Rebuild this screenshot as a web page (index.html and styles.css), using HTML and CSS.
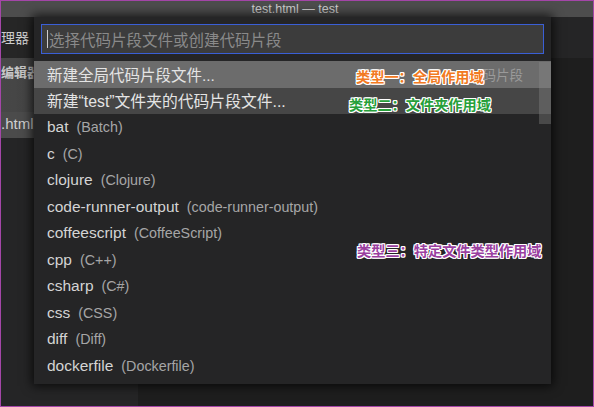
FILE: index.html
```html
<!DOCTYPE html>
<html lang="zh">
<head>
<meta charset="utf-8">
<link rel="stylesheet" href="styles.css">
</head>
<body>
<div class="frame">
  <div class="titlebar">test.html — test</div>
  <div class="main">
    <aside class="sidebar">
      <div class="side-head">理器</div>
      <div class="side-open">
        <div class="side-section">编辑器</div>
        <div class="side-gap"></div>
        <div class="side-file">.html</div>
      </div>
    </aside>
    <section class="editor">
      <div class="tabs"></div>
      <div class="editor-body"></div>
    </section>
  </div>

  <div class="quickpick">
    <div class="qp-input"><span class="caret"></span><span class="placeholder">选择代码片段文件或创建代码片段</span></div>
    <ul class="qp-list">
      <li class="row row-hl1"><span class="label">新建全局代码片段文件...</span><span class="ghost">码片段</span></li>
      <li class="row row-hl2"><span class="label">新建“test”文件夹的代码片段文件...</span></li>
      <li class="row"><span class="label">bat</span><span class="desc">(Batch)</span></li>
      <li class="row"><span class="label">c</span><span class="desc">(C)</span></li>
      <li class="row"><span class="label">clojure</span><span class="desc">(Clojure)</span></li>
      <li class="row"><span class="label">code-runner-output</span><span class="desc">(code-runner-output)</span></li>
      <li class="row"><span class="label">coffeescript</span><span class="desc">(CoffeeScript)</span></li>
      <li class="row"><span class="label">cpp</span><span class="desc">(C++)</span></li>
      <li class="row"><span class="label">csharp</span><span class="desc">(C#)</span></li>
      <li class="row"><span class="label">css</span><span class="desc">(CSS)</span></li>
      <li class="row"><span class="label">diff</span><span class="desc">(Diff)</span></li>
      <li class="row"><span class="label">dockerfile</span><span class="desc">(Dockerfile)</span></li>
    </ul>
    <div class="scrollbar"></div>
  </div>

  <div class="note note-1">类型一：全局作用域</div>
  <div class="note note-2">类型二：文件夹作用域</div>
  <div class="note note-3">类型三：特定文件类型作用域</div>
</div>
</body>
</html>
```

FILE: styles.css
```css
* { box-sizing: border-box; margin: 0; padding: 0; }
html, body { width: 594px; height: 407px; overflow: hidden; background: #1e1e1e; }
body {
  font-family: "Liberation Sans", "Noto Sans CJK SC", sans-serif;
  color: #cccccc;
}
.frame {
  position: relative;
  width: 594px;
  height: 407px;
  border: 1px solid #a446a8;
  display: flex;
  flex-direction: column;
  background: #1e1e1e;
}
.titlebar {
  height: 16px;
  background: #4d4d4d;
  color: #cfcfcf;
  font-size: 12.5px;
  line-height: 16px;
  text-align: center;
  padding-right: 4px;
}
.main { flex: 1; display: flex; min-height: 0; }
.sidebar {
  width: 137px;
  background: #252526;
  display: flex;
  flex-direction: column;
  overflow: hidden;
  white-space: nowrap;
}
.side-head {
  height: 41px;
  line-height: 41px;
  font-family: "Noto Sans CJK SC", sans-serif;
  font-size: 14px;
  color: #cccccc;
  background: #262626;
}
.side-open {
  height: 80px;
  background: linear-gradient(to right, #474747, #3c3c3c);
}
.side-section {
  height: 28px;
  line-height: 28px;
  font-family: "Noto Sans CJK SC", sans-serif;
  font-size: 13px;
  font-weight: bold;
  color: #c8c8c8;
}
.side-gap { height: 26px; }
.side-file {
  height: 26px;
  line-height: 24px;
  font-size: 15px;
  color: #d0d0d0;
  background: #4b4b4b;
}
.editor { flex: 1; display: flex; flex-direction: column; }
.tabs { height: 41px; background: #252526; }
.editor-body { flex: 1; background: #1e1e1e; }

.quickpick {
  position: absolute;
  left: 33px;
  top: 16px;
  width: 517px;
  height: 367px;
  background: #252526;
  box-shadow: 0 0 10px 2px rgba(0, 0, 0, 0.75);
  padding: 7px 7px 0 7px;
}
.qp-input {
  height: 30px;
  border: 1px solid #3a5fd6;
  background: #3c3c3c;
  display: flex;
  align-items: center;
  padding-left: 5px;
}
.caret { width: 1px; height: 18px; background: #cccccc; margin-right: 1px; }
.placeholder {
  font-family: "Noto Sans CJK SC", sans-serif;
  font-size: 15.5px;
  color: #8a8a8a;
}
.qp-list {
  list-style: none;
  margin: 7px -7px 0 -7px;
}
.row {
  height: 26.5px;
  display: flex;
  align-items: center;
  padding-left: 13px;
  position: relative;
  white-space: nowrap;
}
.row-hl1 { background: #6c6c6c; }
.row-hl2 { background: #464646; }
.label {
  font-size: 15.5px;
  color: #d4d4d4;
  font-family: "Liberation Sans", "Noto Sans CJK SC", sans-serif;
}
.row-hl1 .label { font-size: 15.5px; color: #e4e4e4; }
.row-hl2 .label { font-size: 15.8px; color: #e4e4e4; }
.desc {
  font-size: 14.3px;
  color: #a6a6a6;
  margin-left: 8px;
}
.ghost {
  position: absolute;
  right: 28px;
  font-family: "Noto Sans CJK SC", sans-serif;
  font-size: 13.5px;
  color: #9a9a9a;
}
.scrollbar {
  position: absolute;
  right: 0;
  top: 45px;
  width: 12px;
  height: 62px;
  background: rgba(140, 140, 140, 0.35);
}

.note {
  position: absolute;
  font-family: "Noto Sans CJK SC", sans-serif;
  font-weight: bold;
  font-size: 14.2px;
  line-height: 16px;
  white-space: nowrap;
  text-shadow:
    1px 0 0 #fff, -1px 0 0 #fff, 0 1px 0 #fff, 0 -1px 0 #fff,
    1px 1px 0 #fff, -1px -1px 0 #fff, 1px -1px 0 #fff, -1px 1px 0 #fff;
}
.note-1 { left: 355px; top: 67px; color: #f27a22; }
.note-2 { left: 348px; top: 95px; color: #27a03a; }
.note-3 { left: 356px; top: 241px; color: #9a3f9f; }
```
